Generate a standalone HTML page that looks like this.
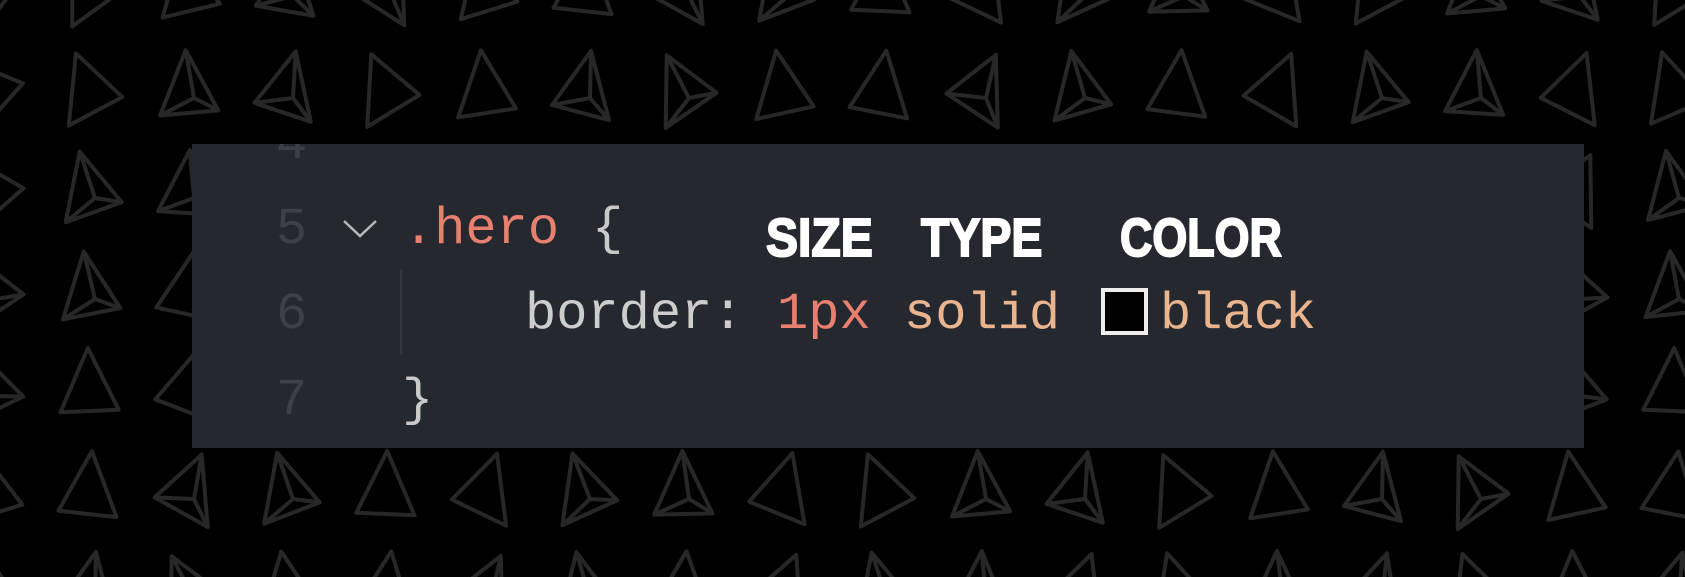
<!DOCTYPE html>
<html><head><meta charset="utf-8"><style>
html,body{margin:0;padding:0;background:#000;width:1685px;height:577px;overflow:hidden;position:relative}
#bg{position:absolute;left:0;top:0;display:block}
#panel{position:absolute;left:192px;top:144px;width:1392px;height:304px;background:#262830;overflow:hidden}
.t{position:absolute;font-family:"Liberation Mono",monospace;font-size:52px;line-height:1;white-space:pre}
.ln{color:#3e4049}
.lab{position:absolute;font-family:"Liberation Sans",sans-serif;font-weight:bold;font-size:54px;color:#fff;line-height:1;transform-origin:0 0;-webkit-text-stroke:2px #fff;white-space:pre}
</style></head><body>
<svg id="bg" width="1685" height="577" xmlns="http://www.w3.org/2000/svg"></svg>
<div id="panel">
  <div class="t ln" style="left:84px;top:-25px">4</div>
  <div class="t ln" style="left:84px;top:60px">5</div>
  <div class="t ln" style="left:84px;top:145px">6</div>
  <div class="t ln" style="left:84px;top:231px">7</div>
  <svg style="position:absolute;left:150px;top:74px" width="36" height="22"><path d="M2 3 L18 18 L34 3" fill="none" stroke="#b8b8b8" stroke-width="2.5"/></svg>
  <div style="position:absolute;left:208px;top:125px;width:2px;height:86px;background:#34363e"></div>
  <div class="t" style="left:211px;top:60px;color:#e7806f">.hero</div>
  <div class="t" style="left:400px;top:60px;color:#c9c9c9">{</div>
  <div class="t" style="left:333px;top:145px;color:#cdcdcd">border:</div>
  <div class="t" style="left:585px;top:145px;color:#e8806f">1px</div>
  <div class="t" style="left:712px;top:145px;color:#e9b48e">solid</div>
  <div style="position:absolute;left:909px;top:144px;width:39px;height:39px;border:4px solid #eee;background:#000"></div>
  <div class="t" style="left:968px;top:145px;color:#e9b48e">black</div>
  <div class="t" style="left:210px;top:231px;color:#c9c9c9">}</div>
  <div class="lab" style="left:574px;top:67px;transform:scaleX(0.89)">SIZE</div>
  <div class="lab" style="left:729px;top:67px;transform:scaleX(0.86)">TYPE</div>
  <div class="lab" style="left:928px;top:67px;transform:scaleX(0.83)">COLOR</div>
</div>
<script>
(function(){
var s=document.getElementById('bg'),h='';
var rows=[-50,52,152,253,350,453,553];
for(var r=0;r<rows.length;r++){
 for(var c=-1;c<18;c++){
  var cx=c*99+89, cy=rows[r]+40;
  var ang=-30+((c*19+r*7)%60);
  var R=42;
  var p=[];
  for(var k=0;k<3;k++){var a=(ang+k*120-90)*Math.PI/180;p.push([cx+R*Math.cos(a)*0.8,cy+R*Math.sin(a)]);}
  var d='M'+p[0][0].toFixed(1)+' '+p[0][1].toFixed(1)+' L'+p[1][0].toFixed(1)+' '+p[1][1].toFixed(1)+' L'+p[2][0].toFixed(1)+' '+p[2][1].toFixed(1)+' Z';
  if((c+r)%4>=2){var ix=cx+6,iy=cy+6;
   d+=' M'+ix+' '+iy+' L'+p[0][0].toFixed(1)+' '+p[0][1].toFixed(1)+' M'+ix+' '+iy+' L'+p[1][0].toFixed(1)+' '+p[1][1].toFixed(1)+' M'+ix+' '+iy+' L'+p[2][0].toFixed(1)+' '+p[2][1].toFixed(1);}
  h+='<path d="'+d+'" fill="none" stroke="#272727" stroke-width="4" stroke-linejoin="round"/>';
 }
}
s.innerHTML=h;
})();
</script>
</body></html>
